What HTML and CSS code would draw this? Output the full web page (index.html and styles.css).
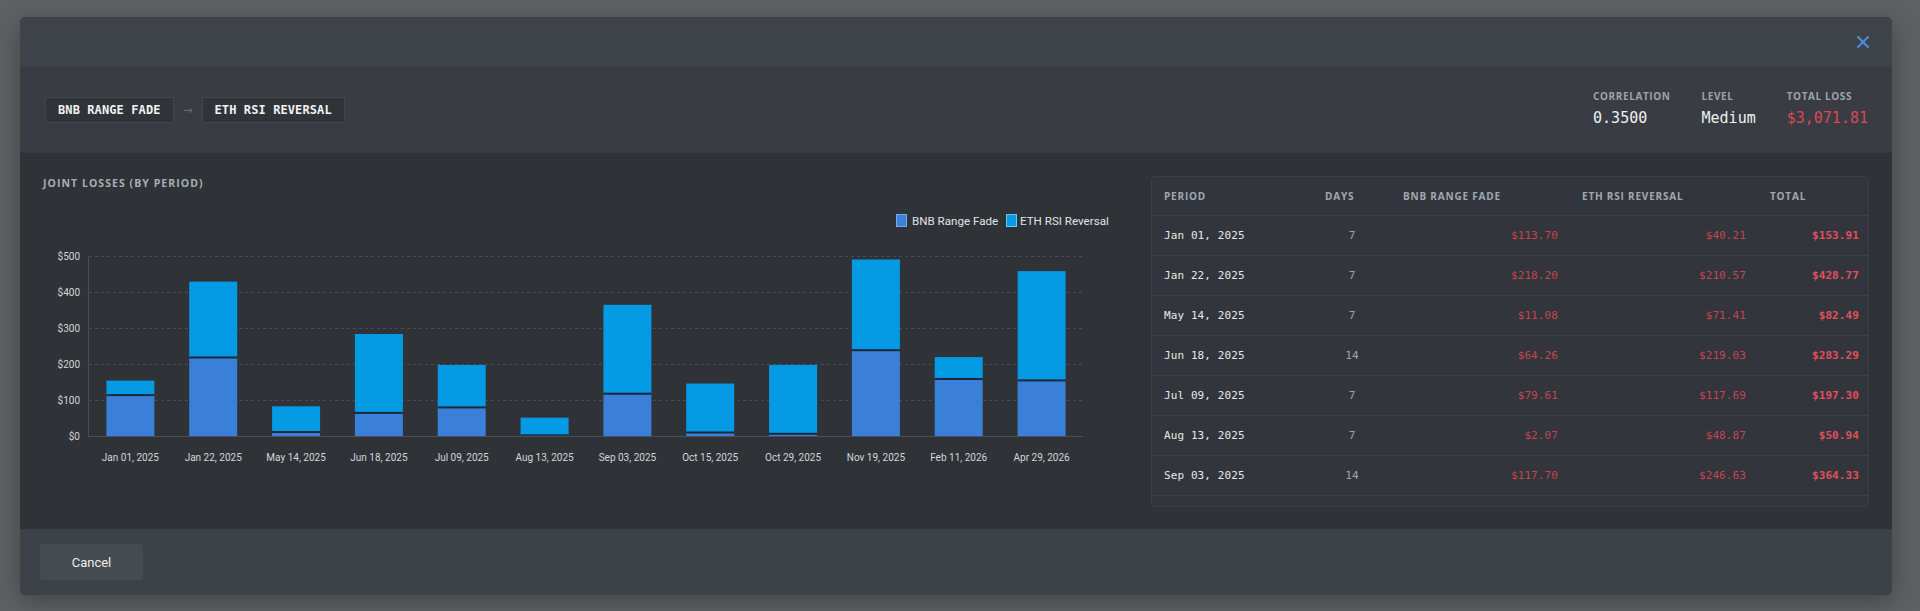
FILE: index.html
```html
<!DOCTYPE html>
<html lang="en">
<head>
<meta charset="utf-8">
<title>Joint Losses</title>
<link rel="stylesheet" href="styles.css">
</head>
<body>
<div class="modal">
  <header class="modal-header">
    <button class="close-btn" aria-label="Close">
      <svg width="12" height="12" viewBox="0 0 12 12"><path d="M1 1 L11 11 M11 1 L1 11" /></svg>
    </button>
  </header>

  <section class="pair-bar">
    <div class="pair">
      <span class="tag">BNB RANGE FADE</span>
      <span class="pair-arrow">&#8594;</span>
      <span class="tag">ETH RSI REVERSAL</span>
    </div>
    <div class="stats">
      <div class="stat">
        <div class="stat-label">CORRELATION</div>
        <div class="stat-value">0.3500</div>
      </div>
      <div class="stat">
        <div class="stat-label">LEVEL</div>
        <div class="stat-value">Medium</div>
      </div>
      <div class="stat">
        <div class="stat-label">TOTAL LOSS</div>
        <div class="stat-value loss">$3,071.81</div>
      </div>
    </div>
  </section>

  <main class="modal-body">
    <div class="chart-panel">
      <h3 class="panel-title">JOINT LOSSES (BY PERIOD)</h3>
      <svg class="chart" width="1068" height="280" viewBox="0 0 1068 280">
        <!-- legend -->
        <rect class="lg-bnb" x="853.5" y="20.5" width="10" height="12" />
        <text class="legend-text" x="869" y="30.5">BNB Range Fade</text>
        <rect class="lg-eth" x="963.5" y="20.5" width="10" height="12" />
        <text class="legend-text" x="977" y="30.5">ETH RSI Reversal</text>

        <!-- grid -->
        <g class="grid">
          <line x1="46" y1="62.5" x2="1040" y2="62.5" />
          <line x1="46" y1="98.5" x2="1040" y2="98.5" />
          <line x1="46" y1="134.5" x2="1040" y2="134.5" />
          <line x1="46" y1="170.5" x2="1040" y2="170.5" />
          <line x1="46" y1="206.5" x2="1040" y2="206.5" />
        </g>
        <line class="axis" x1="45.5" y1="62" x2="45.5" y2="242" />
        <line class="axis" x1="45" y1="242.5" x2="1040" y2="242.5" />

        <g class="y-labels">
          <text x="37" y="66">$500</text>
          <text x="37" y="102">$400</text>
          <text x="37" y="138">$300</text>
          <text x="37" y="174">$200</text>
          <text x="37" y="210">$100</text>
          <text x="37" y="246">$0</text>
        </g>

        <!-- stacked bars: BNB at the base, ETH on top -->
        <g class="bars">
          <rect class="bnb" x="63.4" y="201.07" width="48" height="40.93" /><rect class="eth" x="63.4" y="186.59" width="48" height="14.48" /><rect class="seam" x="63.4" y="200.1" width="48" height="2" />
          <rect class="bnb" x="146.2" y="163.45" width="48" height="78.55" /><rect class="eth" x="146.2" y="87.64" width="48" height="75.81" /><rect class="seam" x="146.2" y="162.5" width="48" height="2" />
          <rect class="bnb" x="229.1" y="238.01" width="48" height="3.99" /><rect class="eth" x="229.1" y="212.3" width="48" height="25.71" /><rect class="seam" x="229.1" y="237" width="48" height="2" />
          <rect class="bnb" x="311.9" y="218.87" width="48" height="23.13" /><rect class="eth" x="311.9" y="140.02" width="48" height="78.85" /><rect class="seam" x="311.9" y="217.9" width="48" height="2" />
          <rect class="bnb" x="394.7" y="213.34" width="48" height="28.66" /><rect class="eth" x="394.7" y="170.97" width="48" height="42.37" /><rect class="seam" x="394.7" y="212.4" width="48" height="2" />
          <rect class="bnb" x="477.6" y="241.25" width="48" height="0.75" /><rect class="eth" x="477.6" y="223.66" width="48" height="17.59" /><rect class="seam" x="477.6" y="240.3" width="48" height="1.5" />
          <rect class="bnb" x="560.4" y="199.63" width="48" height="42.37" /><rect class="eth" x="560.4" y="110.84" width="48" height="88.79" /><rect class="seam" x="560.4" y="198.7" width="48" height="2" />
          <rect class="bnb" x="643.2" y="238.45" width="48" height="3.55" /><rect class="eth" x="643.2" y="189.51" width="48" height="48.94" /><rect class="seam" x="643.2" y="237.5" width="48" height="2" />
          <rect class="bnb" x="726.1" y="239.8" width="48" height="2.2" /><rect class="eth" x="726.1" y="170.89" width="48" height="68.91" /><rect class="seam" x="726.1" y="238.8" width="48" height="2" />
          <rect class="bnb" x="808.9" y="156.16" width="48" height="85.84" /><rect class="eth" x="808.9" y="65.51" width="48" height="90.65" /><rect class="seam" x="808.9" y="155.2" width="48" height="2" />
          <rect class="bnb" x="891.7" y="185.01" width="48" height="56.99" /><rect class="eth" x="891.7" y="163.09" width="48" height="21.92" /><rect class="seam" x="891.7" y="184" width="48" height="2" />
          <rect class="bnb" x="974.6" y="186.34" width="48" height="55.66" /><rect class="eth" x="974.6" y="77.12" width="48" height="109.22" /><rect class="seam" x="974.6" y="185.4" width="48" height="2" />
        </g>

        <g class="x-labels">
          <text x="87.4" y="267">Jan 01, 2025</text>
          <text x="170.2" y="267">Jan 22, 2025</text>
          <text x="253.1" y="267">May 14, 2025</text>
          <text x="335.9" y="267">Jun 18, 2025</text>
          <text x="418.7" y="267">Jul 09, 2025</text>
          <text x="501.6" y="267">Aug 13, 2025</text>
          <text x="584.4" y="267">Sep 03, 2025</text>
          <text x="667.2" y="267">Oct 15, 2025</text>
          <text x="750.1" y="267">Oct 29, 2025</text>
          <text x="832.9" y="267">Nov 19, 2025</text>
          <text x="915.7" y="267">Feb 11, 2026</text>
          <text x="998.6" y="267">Apr 29, 2026</text>
        </g>
      </svg>
    </div>

    <div class="table-wrap">
      <table class="loss-table">
        <colgroup>
          <col class="c-period"><col class="c-days"><col class="c-bnb"><col class="c-eth"><col class="c-total">
        </colgroup>
        <thead>
          <tr><th>PERIOD</th><th>DAYS</th><th>BNB RANGE FADE</th><th>ETH RSI REVERSAL</th><th>TOTAL</th></tr>
        </thead>
        <tbody>
          <tr><td class="date">Jan 01, 2025</td><td class="days">7</td><td class="amt">$113.70</td><td class="amt">$40.21</td><td class="amt total">$153.91</td></tr>
          <tr><td class="date">Jan 22, 2025</td><td class="days">7</td><td class="amt">$218.20</td><td class="amt">$210.57</td><td class="amt total">$428.77</td></tr>
          <tr><td class="date">May 14, 2025</td><td class="days">7</td><td class="amt">$11.08</td><td class="amt">$71.41</td><td class="amt total">$82.49</td></tr>
          <tr><td class="date">Jun 18, 2025</td><td class="days">14</td><td class="amt">$64.26</td><td class="amt">$219.03</td><td class="amt total">$283.29</td></tr>
          <tr><td class="date">Jul 09, 2025</td><td class="days">7</td><td class="amt">$79.61</td><td class="amt">$117.69</td><td class="amt total">$197.30</td></tr>
          <tr><td class="date">Aug 13, 2025</td><td class="days">7</td><td class="amt">$2.07</td><td class="amt">$48.87</td><td class="amt total">$50.94</td></tr>
          <tr><td class="date">Sep 03, 2025</td><td class="days">14</td><td class="amt">$117.70</td><td class="amt">$246.63</td><td class="amt total">$364.33</td></tr>
          <tr><td class="date">Oct 15, 2025</td><td class="days">14</td><td class="amt">$9.85</td><td class="amt">$135.95</td><td class="amt total">$145.80</td></tr>
          <tr><td class="date">Oct 29, 2025</td><td class="days">21</td><td class="amt">$6.12</td><td class="amt">$191.40</td><td class="amt total">$197.52</td></tr>
          <tr><td class="date">Nov 19, 2025</td><td class="days">14</td><td class="amt">$238.45</td><td class="amt">$251.80</td><td class="amt total">$490.25</td></tr>
          <tr><td class="date">Feb 11, 2026</td><td class="days">7</td><td class="amt">$158.30</td><td class="amt">$60.90</td><td class="amt total">$219.20</td></tr>
          <tr><td class="date">Apr 29, 2026</td><td class="days">7</td><td class="amt">$154.60</td><td class="amt">$303.41</td><td class="amt total">$458.01</td></tr>
        </tbody>
      </table>
    </div>
  </main>

  <footer class="modal-footer">
    <button class="btn-cancel">Cancel</button>
  </footer>
</div>
</body>
</html>
```

FILE: styles.css
```css
* {
  box-sizing: border-box;
}

html, body {
  margin: 0;
  height: 611px;
  overflow: hidden;
}

body {
  background: #5f6063;
  font-family: Roboto, "Liberation Sans", sans-serif;
  color: #e8eaed;
}

/* dialog shell */
.modal {
  margin: 17px 28px 0 20px;
  height: 578px;
  border-radius: 6px;
  overflow: hidden;
  display: flex;
  flex-direction: column;
  background: #2f3237;
  box-shadow: 0 6px 24px rgba(0, 0, 0, 0.3);
}

.modal-header {
  height: 51px;
  flex: none;
  background: #3e4249;
  display: flex;
  align-items: center;
  justify-content: flex-end;
  padding: 0 23px;
  border-bottom: 1px solid #383b41;
}

.close-btn {
  background: none;
  border: none;
  padding: 0;
  width: 12px;
  height: 12px;
  display: flex;
  cursor: pointer;
}

.close-btn path {
  stroke: #4a8fe3;
  stroke-width: 2;
  stroke-linecap: round;
  fill: none;
}

/* strategy pair + summary */
.pair-bar {
  height: 85px;
  flex: none;
  background: #393c42;
  display: flex;
  align-items: center;
  justify-content: space-between;
  padding: 0 24px 0 25px;
  border-bottom: 1px solid #34373c;
}

.pair {
  display: flex;
  align-items: center;
}

.tag {
  height: 26px;
  display: flex;
  align-items: center;
  padding: 0 12px;
  background: #303338;
  border: 1px solid #41454c;
  font-family: "DejaVu Sans Mono", monospace;
  font-weight: 700;
  font-size: 12px;
  letter-spacing: 0.1px;
  color: #f0f2f4;
}

.pair-arrow {
  width: 28px;
  text-align: center;
  font-family: "DejaVu Sans", sans-serif;
  font-size: 12px;
  color: #676c74;
}

.stats {
  display: flex;
  gap: 31px;
  margin-top: -2px;
}

.stat-label {
  font-family: "Open Sans", sans-serif;
  font-weight: 700;
  font-size: 10px;
  line-height: 12px;
  letter-spacing: 0.6px;
  color: #9ea3aa;
  margin-bottom: 6px;
}

.stat-value {
  font-family: "DejaVu Sans Mono", monospace;
  font-size: 15px;
  line-height: 20px;
  color: #eef0f2;
}

.stat-value.loss {
  color: #d9475a;
}

/* main content */
.modal-body {
  height: 376px;
  flex: none;
  background: #2f3237;
  display: grid;
  grid-template-columns: 1068px 1fr;
  column-gap: 40px;
  padding: 23px 23px 22px 23px;
}

.chart-panel {
  min-width: 0;
}

.panel-title {
  margin: 0;
  font-family: "Open Sans", sans-serif;
  font-weight: 700;
  font-size: 10.5px;
  line-height: 14px;
  letter-spacing: 1.05px;
  color: #a9aeb5;
}

.chart {
  display: block;
  margin-top: 4px;
}

.legend-text {
  font-family: Roboto, sans-serif;
  font-size: 11.6px;
  fill: #e2e4e7;
}

.lg-bnb {
  fill: #3b80d9;
  stroke: #77a9ea;
  stroke-width: 1;
}

.lg-eth {
  fill: #0a9be6;
  stroke: #6cc6f2;
  stroke-width: 1;
}

.grid line {
  stroke: #474c54;
  stroke-width: 1;
  stroke-dasharray: 3 3;
}

.axis {
  stroke: #4a4f57;
  stroke-width: 1;
}

.y-labels text {
  font-family: Roboto, sans-serif;
  font-size: 10px;
  fill: #d3d6da;
  text-anchor: end;
}

.x-labels text {
  font-family: Roboto, sans-serif;
  font-size: 10px;
  fill: #d3d6da;
  text-anchor: middle;
}

.bars .bnb {
  fill: #3a7fd8;
}

.bars .eth {
  fill: #049be4;
}

.bars .seam {
  fill: #1b2738;
}

/* period table */
.table-wrap {
  height: 331px;
  overflow-y: scroll;
  border: 1px solid #3b4047;
  border-radius: 4px;
  background: #32363c;
}

.table-wrap::-webkit-scrollbar {
  width: 5px;
}

.table-wrap::-webkit-scrollbar-track {
  background: #32363c;
}

.table-wrap::-webkit-scrollbar-thumb {
  background: #62676f;
  border-radius: 3px;
}

.loss-table {
  width: 100%;
  border-collapse: separate;
  border-spacing: 0;
  table-layout: fixed;
}

.c-period { width: 161px; }
.c-days { width: 78px; }
.c-bnb { width: 179px; }
.c-eth { width: 188px; }

.loss-table th {
  text-align: left;
  padding: 0 12px;
  line-height: 38px;
  border-bottom: 1px solid #3d4249;
  font-family: "Open Sans", sans-serif;
  font-weight: 700;
  font-size: 10px;
  letter-spacing: 0.8px;
  color: #a2a8b0;
  white-space: nowrap;
}

.loss-table td {
  padding: 0 12px;
  line-height: 39px;
  border-bottom: 1px solid #3d4249;
  font-family: "DejaVu Sans Mono", monospace;
  font-size: 11px;
  letter-spacing: 0.1px;
  white-space: nowrap;
}

.loss-table td:last-child {
  padding-right: 9px;
}

.loss-table .date {
  color: #e6e8eb;
}

.loss-table .days {
  text-align: center;
  color: #9ea4ac;
}

.loss-table .amt {
  text-align: right;
  color: #c8434f;
}

.loss-table .total {
  font-weight: 700;
  color: #e2505d;
}

/* actions */
.modal-footer {
  height: 66px;
  flex: none;
  background: #3d4148;
  display: flex;
  align-items: center;
  padding: 0 20px;
}

.btn-cancel {
  width: 103px;
  height: 36px;
  border: none;
  border-radius: 3px;
  background: #464a51;
  color: #eceef0;
  font-family: Roboto, sans-serif;
  font-size: 13px;
  cursor: pointer;
}
```
